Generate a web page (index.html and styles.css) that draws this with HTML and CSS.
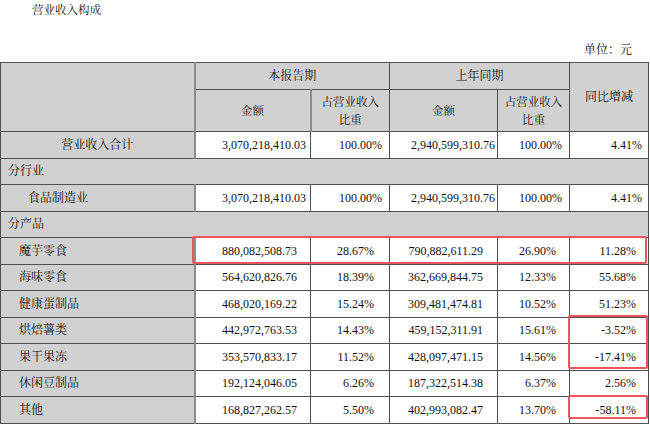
FILE: index.html
```html
<!DOCTYPE html>
<html lang="zh-CN">
<head>
<meta charset="utf-8">
<title>营业收入构成</title>
<link rel="stylesheet" href="styles.css">
</head>
<body>
<div class="page">
  <div class="title">营业收入构成</div>
  <div class="unit">单位：元</div>
  <div class="table-wrap">
    <table class="rev">
      <colgroup>
        <col class="w0"><col class="w1"><col class="w2"><col class="w3"><col class="w4"><col class="w5">
      </colgroup>
      <thead>
        <tr class="h1">
          <th rowspan="2"></th>
          <th colspan="2">本报告期</th>
          <th colspan="2">上年同期</th>
          <th rowspan="2">同比增减</th>
        </tr>
        <tr class="h2">
          <th>金额</th>
          <th>占营业收入<br>比重</th>
          <th>金额</th>
          <th>占营业收入<br>比重</th>
        </tr>
      </thead>
      <tbody>
        <tr class="sum">
          <td class="name center">营业收入合计</td>
          <td class="c1">3,070,218,410.03</td>
          <td class="c2">100.00%</td>
          <td class="c3">2,940,599,310.76</td>
          <td class="c4">100.00%</td>
          <td class="c5">4.41%</td>
        </tr>
        <tr class="group"><td colspan="6">分行业</td></tr>
        <tr class="sum">
          <td class="name ind2">食品制造业</td>
          <td class="c1">3,070,218,410.03</td>
          <td class="c2">100.00%</td>
          <td class="c3">2,940,599,310.76</td>
          <td class="c4">100.00%</td>
          <td class="c5">4.41%</td>
        </tr>
        <tr class="group"><td colspan="6">分产品</td></tr>
        <tr class="prod">
          <td class="name ind1">魔芋零食</td>
          <td class="c1">880,082,508.73</td>
          <td class="c2">28.67%</td>
          <td class="c3">790,882,611.29</td>
          <td class="c4">26.90%</td>
          <td class="c5">11.28%</td>
        </tr>
        <tr class="prod">
          <td class="name ind1">海味零食</td>
          <td class="c1">564,620,826.76</td>
          <td class="c2">18.39%</td>
          <td class="c3">362,669,844.75</td>
          <td class="c4">12.33%</td>
          <td class="c5">55.68%</td>
        </tr>
        <tr class="prod">
          <td class="name ind1">健康蛋制品</td>
          <td class="c1">468,020,169.22</td>
          <td class="c2">15.24%</td>
          <td class="c3">309,481,474.81</td>
          <td class="c4">10.52%</td>
          <td class="c5">51.23%</td>
        </tr>
        <tr class="prod">
          <td class="name ind1">烘焙薯类</td>
          <td class="c1">442,972,763.53</td>
          <td class="c2">14.43%</td>
          <td class="c3">459,152,311.91</td>
          <td class="c4">15.61%</td>
          <td class="c5">-3.52%</td>
        </tr>
        <tr class="prod">
          <td class="name ind1">果干果冻</td>
          <td class="c1">353,570,833.17</td>
          <td class="c2">11.52%</td>
          <td class="c3">428,097,471.15</td>
          <td class="c4">14.56%</td>
          <td class="c5">-17.41%</td>
        </tr>
        <tr class="prod">
          <td class="name ind1">休闲豆制品</td>
          <td class="c1">192,124,046.05</td>
          <td class="c2">6.26%</td>
          <td class="c3">187,322,514.38</td>
          <td class="c4">6.37%</td>
          <td class="c5">2.56%</td>
        </tr>
        <tr class="prod">
          <td class="name ind1">其他</td>
          <td class="c1">168,827,262.57</td>
          <td class="c2">5.50%</td>
          <td class="c3">402,993,082.47</td>
          <td class="c4">13.70%</td>
          <td class="c5">-58.11%</td>
        </tr>
      </tbody>
    </table>
    <div class="mark mark-row"></div>
    <div class="mark mark-pair"></div>
    <div class="mark mark-last"></div>
  </div>
</div>
</body>
</html>
```
FILE: styles.css
```css
html, body {
  margin: 0;
  padding: 0;
  background: #ffffff;
}

body {
  font-family: "Liberation Serif", "Noto Serif CJK SC", "Noto Sans CJK SC", serif;
  font-size: 12px;
  color: #111111;
}

.page {
  width: 650px;
  height: 424px;
  overflow: hidden;
  display: flex;
  flex-direction: column;
}

.title {
  height: 20px;
  line-height: 16px;
  padding: 2px 0 0 32px;
  box-sizing: border-box;
  font-size: 11.5px;
  margin-bottom: 22px;
}

.unit {
  height: 20px;
  line-height: 16px;
  text-align: right;
  padding-right: 18px;
  font-size: 12px;
}

.table-wrap {
  position: relative;
  width: 650px;
}

.rev {
  border-collapse: collapse;
  table-layout: fixed;
  width: 648px;
}

.w0 { width: 194px; }
.w1 { width: 116px; }
.w2 { width: 79px; }
.w3 { width: 108px; }
.w4 { width: 72px; }
.w5 { width: 79px; }

.rev th,
.rev td {
  border: 1px solid #505050;
  padding: 0;
  white-space: nowrap;
  overflow: visible;
}

.rev th {
  background: #d2d1d2;
  font-weight: normal;
  text-align: center;
  vertical-align: middle;
  font-size: 12px;
  line-height: 18px;
}

.h1 { height: 27px; }
.h2 { height: 42px; }
.h2 th { font-size: 11.5px; }

.rev tbody tr { height: 26.5px; }

.rev td {
  background: #ffffff;
  text-align: right;
  vertical-align: middle;
  line-height: 16px;
}

.rev td.name {
  background: #d2d1d2;
  text-align: left;
  border-right: 2px solid #8c8c8c;
}

.rev th:first-child {
  border-right: 2px solid #8c8c8c;
}

.rev td.center { text-align: center; }
.rev td.ind1 { padding-left: 18px; }
.rev td.ind2 { padding-left: 27px; }

.rev tr.group td {
  background: #d2d1d2;
  text-align: left;
  padding-left: 7px;
}

.sum .c1 { padding-right: 4px; }
.sum .c2 { padding-right: 7px; }
.sum .c3 { padding-right: 2px; }
.sum .c4 { padding-right: 7px; }
.sum .c5 { padding-right: 6px; }

.prod .c1 { padding-right: 13px; }
.prod .c2 { padding-right: 15px; }
.prod .c3 { padding-right: 14px; }
.prod .c4 { padding-right: 13px; }
.prod .c5 { padding-right: 12px; }

.mark {
  position: absolute;
  border: 2.5px solid #e8575b;
  border-radius: 2px;
  box-sizing: border-box;
  pointer-events: none;
}

.mark-row {
  left: 192px;
  top: 174px;
  width: 455px;
  height: 28px;
}

.mark-pair {
  left: 568px;
  top: 253px;
  width: 80px;
  height: 54px;
}

.mark-last {
  left: 568px;
  top: 333px;
  width: 80px;
  height: 24px;
}
```
